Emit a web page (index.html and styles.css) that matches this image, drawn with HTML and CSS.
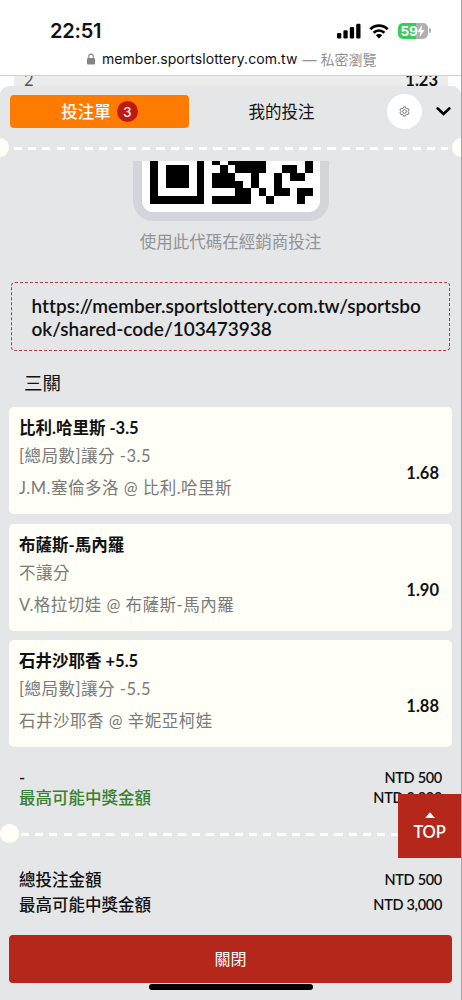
FILE: index.html
```html
<!DOCTYPE html>
<html lang="zh-Hant">
<head>
    <meta charset="UTF-8">
    <meta name="viewport" content="width=device-width, initial-scale=1.0">
    <title>投注單</title>
    <link rel="stylesheet" href="styles.css">
</head>
<body>
    <div class="phone">
        <!-- 狀態列 -->
        <header class="browser-bar">
            <div class="status-bar">
                <span class="time">22:51</span>
                <div class="status-icons">
                    <svg class="signal" width="24" height="16" viewBox="0 0 24 16">
                        <rect x="0" y="10" width="4.3" height="5.5" rx="1.2"/>
                        <rect x="6.4" y="7.3" width="4.3" height="8.2" rx="1.2"/>
                        <rect x="12.8" y="4" width="4.3" height="11.5" rx="1.2"/>
                        <rect x="19.2" y="0.8" width="4.3" height="14.7" rx="1.2"/>
                    </svg>
                    <svg class="wifi" width="20" height="15" viewBox="0 0 20 15">
                        <path d="M1.3 5.2a12.5 12.5 0 0 1 17.4 0" fill="none" stroke="#000" stroke-width="2.7"/>
                        <path d="M4.6 8.7a7.7 7.7 0 0 1 10.8 0" fill="none" stroke="#000" stroke-width="2.6"/>
                        <path d="M6.8 11.2a4.6 4.6 0 0 1 6.4 0L10 14.6z"/>
                    </svg>
                    <div class="battery">
                        <span>59</span>
                        <svg width="8" height="12" viewBox="0 0 8 12"><path d="M5.2 0L.4 6.7h3L2.6 12l5-7H4.5z" fill="#fff"/></svg>
                    </div>
                </div>
            </div>
            <div class="address">
                <svg width="8" height="12" viewBox="0 0 8 12">
                    <path d="M1.8 6V3.3a2.2 2.2 0 0 1 4.4 0V6" fill="none" stroke="#858585" stroke-width="1.1"/>
                    <rect x="0" y="5" width="8" height="6.5" rx="1" fill="#858585"/>
                </svg>
                <span class="host">member.sportslottery.com.tw</span>
                <span class="private">— 私密瀏覽</span>
            </div>
        </header>

        <!-- 後方頁面 -->
        <div class="behind">
            <div class="behind-row"><span>2</span><b>1.23</b></div>
        </div>

        <main class="sheet">
            <nav class="tabs">
                <button class="tab active">投注單 <span class="count">3</span></button>
                <button class="tab">我的投注</button>
                <button class="settings" aria-label="設定">
                    <svg width="11" height="11" viewBox="0 0 24 24" fill="none" stroke="#555" stroke-width="1.7">
                        <path d="M10 2h4l1 3 2 1 3-.5 2 3.5-2 2.200v1.600l2 2.200-2 3.500-3-.5-2 1-1 3h-4l-1-3-2-1-3 .5L2 15l2-2.200v-1.600L2 9l2-3.500 3 .5 2-1z"/>
                        <circle cx="12" cy="12" r="4"/>
                    </svg>
                </button>
                <svg class="chevron" width="15" height="9" viewBox="0 0 15 9"><path d="M1.700 1.500l5.800 5.500 5.800-5.500" fill="none" stroke="#000" stroke-width="2.600" stroke-linecap="round"/></svg>
            </nav>
            <div class="divider divider-top"><i class="notch"></i><i class="dashes"></i><i class="notch"></i></div>

            <!-- QR code -->
            <section class="share">
                <div class="qr-frame">
                    <svg class="qr" width="163" height="43" viewBox="0 0 21 5.54" preserveAspectRatio="none" shape-rendering="crispEdges">
                        <path d="M0 0h1v5.540h-1zM6 0h1v5.540h-1zM1 4.540h5v1h-5zM2 .54h3v3h-3z"/>
                        <path d="M8 0h1v.54h-1zM10 0h5v.54h-5zM20 0h1v.54h-1z"/>
                        <path d="M9 .54h1v1h-1zM11 .54h4v1h-4zM17 .54h2v1h-2zM20 .54h1v1h-1z"/>
                        <path d="M8 1.540h3v1h-3zM13 1.540h1v1h-1zM16 1.540h1v1h-1zM18 1.540h2v1h-2z"/>
                        <path d="M8 2.540h4v1h-4zM13 2.540h1v1h-1zM16 2.540h1v1h-1z"/>
                        <path d="M11 3.540h2v1h-2zM14 3.540h1v1h-1zM16 3.540h2v1h-2zM19 3.540h2v1h-2z"/>
                        <path d="M8 4.540h5v1h-5zM15 4.540h1v1h-1zM19 4.540h1v1h-1z"/>
                    </svg>
                </div>
                <p class="hint">使用此代碼在經銷商投注</p>
                <div class="share-link">https://member.sportslottery.com.tw/sportsbook/shared-code/103473938</div>
            </section>

            <h2 class="parlay">三關</h2>

            <!-- 投注項目 -->
            <ul class="bets">
                <li class="bet">
                    <div class="bet-info">
                        <h3>比利.哈里斯 -3.5</h3>
                        <p class="market">[總局數]讓分 -3.5</p>
                        <p class="match">J.M.塞倫多洛 @ 比利.哈里斯</p>
                    </div>
                    <span class="odds">1.68</span>
                </li>
                <li class="bet">
                    <div class="bet-info">
                        <h3>布薩斯-馬內羅</h3>
                        <p class="market">不讓分</p>
                        <p class="match">V.格拉切娃 @ 布薩斯-馬內羅</p>
                    </div>
                    <span class="odds">1.90</span>
                </li>
                <li class="bet">
                    <div class="bet-info">
                        <h3>石井沙耶香 +5.5</h3>
                        <p class="market">[總局數]讓分 -5.5</p>
                        <p class="match">石井沙耶香 @ 辛妮亞柯娃</p>
                    </div>
                    <span class="odds">1.88</span>
                </li>
            </ul>

            <!-- 金額 -->
            <div class="amounts">
                <div class="row"><span>-</span><span class="money">NTD 500</span></div>
                <div class="row"><span class="win">最高可能中獎金額</span><span class="money">NTD 3,000</span></div>
            </div>
            <div class="divider divider-bottom"><i class="notch"></i><i class="dashes"></i></div>
            <div class="amounts totals">
                <div class="row"><span>總投注金額</span><span class="money">NTD 500</span></div>
                <div class="row"><span>最高可能中獎金額</span><span class="money">NTD 3,000</span></div>
            </div>

            <button class="close">關閉</button>
        </main>

        <a class="to-top">
            <svg width="10" height="6" viewBox="0 0 10 6"><path d="M0 6Q2.500 3.500 4 1.200Q5 0 6 1.200Q7.500 3.500 10 6z" fill="#fff"/></svg>
            <span>TOP</span>
        </a>
        <div class="home-indicator"></div>
    </div>
</body>
</html>
```
FILE: styles.css
```css
* {
    box-sizing: border-box;
}

body {
    margin: 0;
    font-family: Lato, "Noto Sans CJK TC", sans-serif;
    font-variant-ligatures: none;
    color: #111;
    background: #fff;
}

h2, h3, p, ul {
    margin: 0;
    padding: 0;
}

button {
    font-family: inherit;
    border: none;
    padding: 0;
    color: inherit;
    background: none;
}

svg {
    display: block;
    flex: none;
}

.phone {
    position: relative;
    width: 462px;
    height: 1000px;
    overflow: hidden;
    border-right: 1px solid #a5a6a9;
}

/* 狀態列 */
.browser-bar {
    height: 76px;
    border-bottom: 1px solid #d0d0d0;
    font-family: Inter, "Noto Sans CJK TC", sans-serif;
}

.status-bar {
    display: flex;
    justify-content: space-between;
    align-items: center;
    height: 46px;
    padding: 16px 33px 0 50px;
}

.time {
    font-size: 20px;
    font-weight: 600;
    letter-spacing: -0.2px;
}

.status-icons {
    display: flex;
    align-items: center;
    gap: 8px;
}

.battery {
    position: relative;
    display: flex;
    align-items: center;
    justify-content: center;
    width: 30px;
    height: 16px;
    margin-left: 1px;
    border-radius: 5px;
    color: #fff;
    font-size: 13.5px;
    font-weight: 700;
    letter-spacing: -0.3px;
    background: linear-gradient(to right, #3acb5b 60%, #b0b0b0 60%);
}

.battery::after {
    content: "";
    position: absolute;
    right: -3px;
    top: 5px;
    width: 2px;
    height: 5px;
    border-radius: 0 2px 2px 0;
    background: #b0b0b0;
}

.address {
    display: flex;
    align-items: center;
    height: 25px;
    padding-left: 87px;
    font-size: 14px;
    white-space: nowrap;
}

.host {
    margin-left: 7px;
    letter-spacing: 0.06px;
}

.private {
    margin-left: 5px;
    color: #929292;
}

/* 後方頁面 */
.behind {
    height: 10px;
    padding: 0 13px 0 14px;
}

.behind-row {
    display: flex;
    justify-content: space-between;
    height: 18px;
    padding: 0 10px;
    overflow: hidden;
    background: #ececec;
    font-size: 16.5px;
    line-height: 8px;
    color: #555;
}

.behind-row b {
    color: #111;
}

/* 投注單 */
.sheet {
    position: relative;
    height: 914px;
    border-radius: 9px 9px 0 0;
    background: #e4e6e8;
}

.tabs {
    display: flex;
    align-items: center;
    height: 51px;
    padding: 0 10px;
}

.tab {
    display: flex;
    align-items: center;
    justify-content: center;
    width: 179px;
    height: 33px;
    padding-bottom: 1px;
    font-size: 16.5px;
}

.tab.active {
    border-radius: 4px;
    color: #fff;
    font-weight: 500;
    background: #ff7b00;
}

.count {
    width: 21px;
    height: 21px;
    margin-left: 6px;
    border-radius: 50%;
    font-size: 14px;
    line-height: 21px;
    background: #be1a14;
}

.tab + .tab {
    width: 185px;
}

.settings {
    display: flex;
    align-items: center;
    justify-content: center;
    width: 35px;
    height: 35px;
    margin-left: 13px;
    border-radius: 50%;
    background: #fff;
}

.chevron {
    margin-left: 14px;
}

/* 虛線分隔 */
.divider {
    display: flex;
    align-items: center;
    height: 20px;
}

.notch {
    flex: none;
    width: 19px;
    height: 19px;
    border-radius: 50%;
    background: #fffff8;
}

.dashes {
    flex: 1;
    height: 3px;
    background: repeating-linear-gradient(to right, #fffff8 0, #fffff8 8px, transparent 8px, transparent 14.25px);
}

.divider-top {
    margin: 0 -10px;
}

.divider-top .dashes {
    margin: 2px 4px 0 5px;
}

.divider-bottom .dashes {
    margin: 2px 0 0 2px;
}

/* QR code */
.share {
    display: flex;
    flex-direction: column;
    align-items: center;
    padding-top: 4px;
}

.qr-frame {
    width: 196px;
    height: 60px;
    padding: 0 8px;
    border: 9px solid #d4d5db;
    border-top: 0;
    border-radius: 0 0 20px 20px;
    background: #fff;
}

.hint {
    height: 42px;
    font-size: 16.5px;
    line-height: 43px;
    color: #929397;
}

.share-link {
    width: 439px;
    height: 69px;
    margin-top: 19px;
    padding: 11px 19.5px;
    border: 1px dashed #ba3442;
    border-radius: 4px;
    font-size: 19px;
    font-weight: 600;
    line-height: 23px;
    word-break: break-all;
}

.parlay {
    height: 56px;
    padding-left: 24px;
    font-size: 18.5px;
    font-weight: 400;
    line-height: 65px;
}

/* 投注項目 */
.bets {
    display: flex;
    flex-direction: column;
    gap: 9.5px;
    padding: 0 9px;
    list-style: none;
}

.bet {
    display: flex;
    justify-content: space-between;
    height: 107px;
    padding: 9px 13px 0 10px;
    border-radius: 5px;
    background: #fffef7;
}

.bet h3 {
    font-size: 16.5px;
    font-weight: 700;
    line-height: 25px;
}

.market,
.match {
    color: #7a7a78;
    font-size: 16.5px;
    letter-spacing: 0.5px;
}

.market {
    line-height: 30px;
}

.match {
    line-height: 34px;
}

.odds {
    font-size: 16.5px;
    font-weight: 700;
    line-height: 114px;
}

/* 金額 */
.amounts {
    padding: 21px 19px 0;
    font-size: 16.5px;
    font-weight: 500;
}

.row {
    display: flex;
    justify-content: space-between;
    height: 20px;
    line-height: 20px;
}

.win {
    color: #37802c;
}

.money {
    font-size: 14.5px;
    font-weight: 600;
    letter-spacing: -0.3px;
}

.divider-bottom {
    margin-top: 15px;
}

.totals {
    padding-top: 24px;
}

.totals .row {
    height: 25px;
    line-height: 26px;
}

.close {
    display: block;
    width: 443px;
    height: 48px;
    margin: 18px 0 0 9px;
    padding-bottom: 2px;
    border-radius: 4px;
    color: #fff;
    font-size: 16px;
    background: #b5261b;
}

.to-top {
    position: absolute;
    right: 0;
    top: 794px;
    display: flex;
    flex-direction: column;
    align-items: center;
    width: 63px;
    height: 64px;
    padding-top: 18px;
    color: #fff;
    font-size: 16.5px;
    font-weight: 600;
    line-height: 28px;
    letter-spacing: -0.2px;
    background: #b5261b;
}

.home-indicator {
    position: absolute;
    left: 149px;
    top: 984px;
    width: 164px;
    height: 6px;
    border-radius: 3px;
    background: #000;
}
```
